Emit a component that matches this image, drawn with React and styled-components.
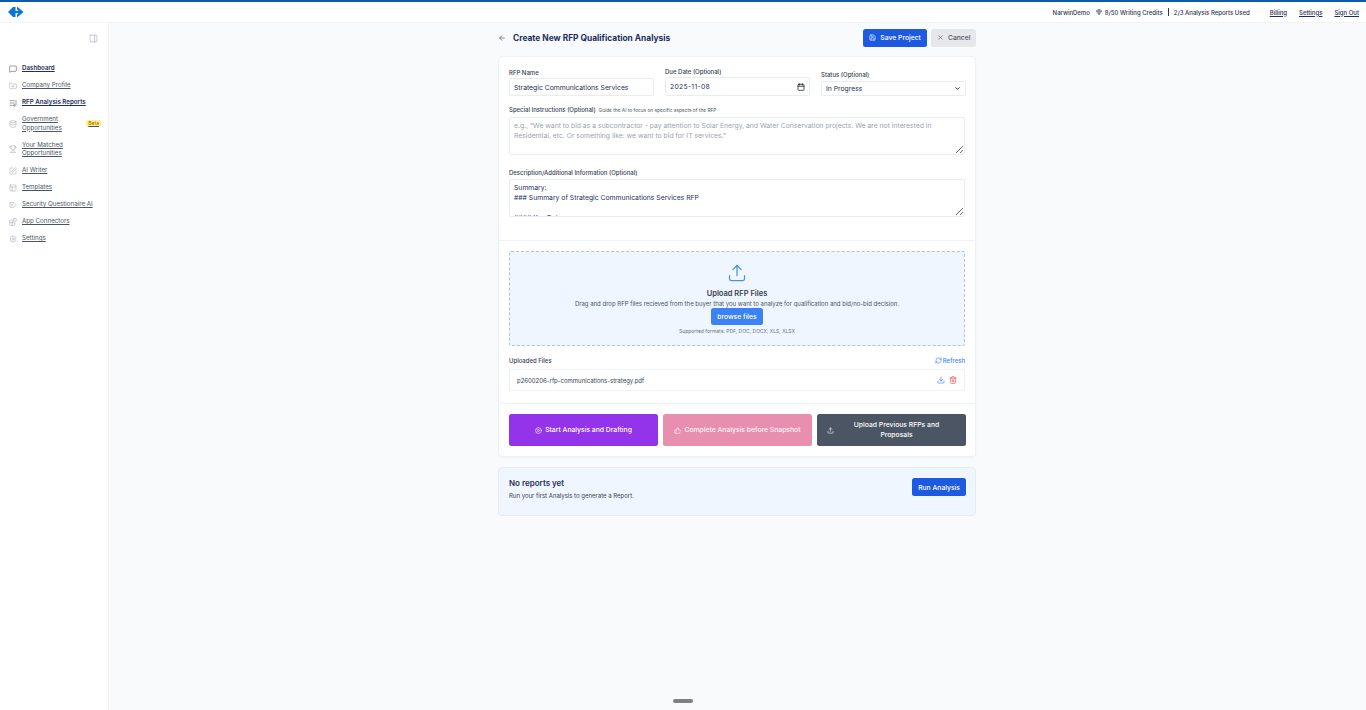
import React from "react";
import styled, { createGlobalStyle } from "styled-components";
import {
  ArrowLeft,
  Save,
  X,
  PanelRight,
  MessageSquare,
  FolderPlus,
  ListEnd,
  Database,
  Trophy,
  SquarePen,
  PanelsTopLeft,
  Blocks,
  Settings,
  Upload,
  RefreshCw,
  Download,
  Trash2,
  CirclePlay,
  ThumbsUp,
  Gem,
  ChevronDown,
  Calendar,
} from "lucide-react";

const NAVY = "#1e2f5c";

const GlobalStyle = createGlobalStyle`
  * { box-sizing: border-box; }
  html, body { margin: 0; height: 100%; }
  body {
    font-family: Inter, "Liberation Sans", sans-serif;
    background: #f8fafc;
    color: ${NAVY};
    overflow: hidden;
  }
`;

const Page = styled.div`
  position: relative;
  height: 710px;
  display: flex;
  flex-direction: column;
`;

const TopBar = styled.header`
  height: 23px;
  flex: none;
  display: flex;
  align-items: center;
  justify-content: space-between;
  padding: 0 7px 0 8px;
  background: #fff;
  border-top: 2px solid #0b5cab;
  border-bottom: 1px solid #f1f3f6;
`;

const Account = styled.div`
  display: flex;
  align-items: center;
  font-size: 6px;
  font-weight: 500;
  color: #2a3654;
`;

const Credits = styled.span`
  display: inline-flex;
  align-items: center;
  gap: 3px;
  margin-left: 6px;
`;

const Divider = styled.span`
  width: 1px;
  height: 8px;
  margin: 0 5px;
  background: #2a3654;
`;

const TopLink = styled.a`
  margin-left: ${(p) => p.$gap}px;
  text-decoration: underline;
  color: ${NAVY};
`;

const Body = styled.div`
  flex: 1;
  display: flex;
  min-height: 0;
`;

const Sidebar = styled.aside`
  width: 109px;
  flex: none;
  padding: 11px 10px 0 9px;
  background: #fff;
  border-right: 1px solid #f1f3f6;
`;

const CollapseRow = styled.div`
  display: flex;
  justify-content: flex-end;
  color: #9ca3af;
  margin-bottom: 17px;
`;

const NavList = styled.nav`
  display: flex;
  flex-direction: column;
  margin-right: -4px;
`;

const NavItem = styled.a`
  display: flex;
  align-items: center;
  min-height: ${(p) => (p.$tall ? 25.5 : 17)}px;
  gap: 5px;
  font-size: 6.2px;
  line-height: 8.5px;
  font-weight: ${(p) => (p.$active ? 600 : 400)};
  color: ${(p) => (p.$active ? NAVY : "#4b5563")};
  text-decoration: underline;
  svg {
    flex: none;
    color: ${(p) => (p.$active ? "#374151" : "#9ca3af")};
  }
`;

const NavLabel = styled.span`
  flex: 1;
`;

const Beta = styled.span`
  margin-right: 1px;
  padding: 0 2px;
  font-size: 5px;
  line-height: 7px;
  color: #a16207;
  background: #fef08a;
  border-radius: 2px;
`;

const Main = styled.main`
  flex: 1;
  display: flex;
  justify-content: center;
  padding-top: 4px;
`;

const Column = styled.div`
  width: 478px;
  margin-left: -1px;
`;

const TitleRow = styled.div`
  height: 21px;
  display: flex;
  align-items: center;
  margin-bottom: 8px;
`;

const BackIcon = styled(ArrowLeft)`
  color: #4b5563;
  margin-right: 7px;
  flex: none;
`;

const Title = styled.h1`
  flex: 1;
  margin: 0;
  font-size: 8.4px;
  font-weight: 700;
  color: ${NAVY};
`;

const HeaderButton = styled.button`
  height: 18px;
  display: inline-flex;
  align-items: center;
  gap: 4px;
  padding: 0 ${(p) => (p.$primary ? 6.5 : 5.5)}px;
  margin-left: ${(p) => (p.$primary ? 0 : 4)}px;
  border: 0;
  border-radius: 2.5px;
  font: 500 6.8px Inter, sans-serif;
  color: ${(p) => (p.$primary ? "#fff" : "#52525b")};
  background: ${(p) => (p.$primary ? "#1d5ae0" : "#e5e7eb")};
`;

const Card = styled.section`
  background: #fff;
  border: 1px solid #eef1f5;
  border-radius: 4px;
  box-shadow: 0 1px 2px rgba(15, 23, 42, 0.04);
`;

const FormBlock = styled.div`
  padding: 10px 10px 23px;
  border-bottom: 1px solid #eef1f5;
`;

const FieldRow = styled.div`
  display: grid;
  grid-template-columns: repeat(3, 145px);
  column-gap: 11px;
  margin-bottom: 9px;
  align-items: end;
`;

const Field = styled.label`
  display: block;
`;

const Label = styled.span`
  display: block;
  margin-bottom: ${(p) => p.$gap ?? 2}px;
  font-size: 6px;
  line-height: 9px;
  font-weight: 500;
  color: #374151;
`;

const Hint = styled.span`
  margin-left: 3px;
  font-size: 4.8px;
  font-weight: 400;
  color: #4b5563;
`;

const inputSkin = `
  background: #fff;
  border: 1px solid #e9ecf1;
  border-radius: 2px;
  font-family: Inter, sans-serif;
  font-size: 6.8px;
  color: ${NAVY};
`;

const TextInput = styled.input`
  ${inputSkin}
  display: block;
  width: 100%;
  height: 18px;
  padding: 0 4px;
  outline: none;
`;

const ControlBox = styled.div`
  ${inputSkin}
  height: ${(p) => p.$h}px;
  display: flex;
  align-items: center;
  justify-content: space-between;
  padding: 0 4px;
`;

const BareInput = styled.input`
  width: 70%;
  padding: 0;
  border: 0;
  outline: none;
  background: none;
  font: inherit;
  color: inherit;
  letter-spacing: 0.3px;
`;

const BareSelect = styled.select`
  flex: 1;
  padding: 0;
  border: 0;
  outline: none;
  background: none;
  appearance: none;
  font: inherit;
  color: inherit;
`;

const TextArea = styled.textarea`
  ${inputSkin}
  display: block;
  width: 100%;
  height: 38px;
  padding: 3px 4px;
  line-height: 10px;
  overflow: hidden;
  outline: none;
  margin-bottom: ${(p) => p.$gap ?? 0}px;
  &::placeholder {
    color: #9ca3af;
  }
`;

const UploadBlock = styled.div`
  padding: 10px 10px 12px;
  border-bottom: 1px solid #eef1f5;
`;

const DropZone = styled.div`
  height: 95px;
  display: flex;
  flex-direction: column;
  align-items: center;
  padding-top: 11px;
  background: #eff6ff;
  border: 1px dashed #a9c4e8;
  border-radius: 2px;
  color: #4b5563;
`;

const UploadIcon = styled(Upload)`
  color: #4a90e2;
  margin-bottom: 4px;
`;

const DropTitle = styled.div`
  font-size: 7.5px;
  line-height: 13px;
  font-weight: 600;
  color: #374151;
`;

const DropText = styled.div`
  font-size: 6px;
  line-height: 8px;
  color: #4b5563;
`;

const BrowseButton = styled.button`
  height: 17px;
  margin: 0 0 2px;
  padding: 0 6px;
  border: 0;
  border-radius: 2.5px;
  font: 500 6.8px Inter, sans-serif;
  color: #fff;
  background: #3b82f6;
`;

const Formats = styled.div`
  font-size: 5px;
  line-height: 8px;
  color: #6b7280;
`;

const FilesHeader = styled.div`
  display: flex;
  justify-content: space-between;
  align-items: center;
  margin: 10px 0 4px;
  font-size: 6px;
  line-height: 9px;
  font-weight: 500;
  color: #374151;
`;

const RefreshLink = styled.span`
  display: inline-flex;
  align-items: center;
  gap: 1px;
  color: #3b82f6;
`;

const FileRow = styled.div`
  height: 22px;
  display: flex;
  align-items: center;
  justify-content: space-between;
  padding: 0 7px;
  font-size: 6px;
  color: #374151;
  border: 1px solid #eef1f5;
  border-radius: 2px;
`;

const FileActions = styled.div`
  display: flex;
  gap: 4px;
`;

const ActionRow = styled.div`
  display: grid;
  grid-template-columns: repeat(3, 149px);
  gap: 5px;
  padding: 10px;
`;

const ActionButton = styled.button`
  height: 32px;
  display: flex;
  align-items: center;
  justify-content: center;
  gap: 3px;
  padding: 0 10px;
  border: 0;
  border-radius: 2.5px;
  white-space: ${(p) => (p.$wrap ? "normal" : "nowrap")};
  font: 500 6.8px/10px Inter, sans-serif;
  color: ${(p) => p.$fg};
  background: ${(p) => p.$bg};
`;

const WrappedLabel = styled.span`
  flex: 1;
  text-align: center;
`;

const ReportCard = styled.section`
  height: 49px;
  margin-top: 10px;
  display: flex;
  align-items: flex-start;
  justify-content: space-between;
  padding: 10px 9px 0 10px;
  background: #eff6ff;
  border: 1px solid #e3ecf8;
  border-radius: 4px;
`;

const ReportTitle = styled.div`
  font-size: 8px;
  line-height: 11px;
  font-weight: 600;
  color: ${NAVY};
`;

const ReportText = styled.div`
  margin-top: 3px;
  font-size: 6px;
  line-height: 8px;
  color: #374151;
`;

const RunButton = styled.button`
  height: 18px;
  padding: 0 6px;
  border: 0;
  border-radius: 2.5px;
  font: 500 6.8px Inter, sans-serif;
  color: #fff;
  background: #1d5ae0;
`;

const Handle = styled.div`
  position: absolute;
  left: 673px;
  top: 699px;
  width: 20px;
  height: 4px;
  border-radius: 2px;
  background: #808080;
`;

const Logo = () => (
  <svg width="16" height="12" viewBox="0 0 16 12" aria-hidden="true">
    <path d="M0 6 L5 1 H7.5 V11 H5 Z" fill="#0b74d8" />
    <path d="M9 0.5 L15.5 6 L9 11.5 V8.5 L11.8 6 L9 3.5 Z" fill="#0b74d8" />
    <path d="M6 4.8 H12 V7.2 H6 Z" fill="#0b74d8" />
  </svg>
);

// tag-shaped mark next to the security item, no package has this one
const SecurityIcon = ({ size, strokeWidth }) => (
  <svg
    width={size}
    height={size}
    viewBox="0 0 24 24"
    fill="none"
    stroke="currentColor"
    strokeWidth={strokeWidth}
    aria-hidden="true"
  >
    <path d="M3 5 H15 L22 12 L15 19 H3 Z" />
    <path d="M7 10 H13 M7 14 H11" />
  </svg>
);

const navItems = [
  { label: "Dashboard", Icon: MessageSquare, active: true },
  { label: "Company Profile", Icon: FolderPlus },
  { label: "RFP Analysis Reports", Icon: ListEnd, active: true },
  { label: "Government Opportunities", Icon: Database, tall: true, beta: true },
  { label: "Your Matched Opportunities", Icon: Trophy, tall: true },
  { label: "AI Writer", Icon: SquarePen },
  { label: "Templates", Icon: PanelsTopLeft },
  { label: "Security Questionaire AI", Icon: SecurityIcon },
  { label: "App Connectors", Icon: Blocks },
  { label: "Settings", Icon: Settings },
];

const descriptionValue =
  "Summary:\n### Summary of Strategic Communications Services RFP\n\n#### Key Dates";

const instructionsHint =
  'e.g., "We want to bid as a subcontractor - pay attention to Solar Energy, and Water Conservation projects. We are not interested in Residential, etc. Or something like: we want to bid for IT services."';

export default function App() {
  return (
    <Page>
      <GlobalStyle />
      <TopBar>
        <Logo />
        <Account>
          NarwinDemo
          <Credits>
            <Gem size={6} />
            8/50 Writing Credits
          </Credits>
          <Divider />
          2/3 Analysis Reports Used
          <TopLink $gap={20}>Billing</TopLink>
          <TopLink $gap={12}>Settings</TopLink>
          <TopLink $gap={12}>Sign Out</TopLink>
        </Account>
      </TopBar>
      <Body>
        <Sidebar>
          <CollapseRow>
            <PanelRight size={9} strokeWidth={1.5} />
          </CollapseRow>
          <NavList>
            {navItems.map(({ label, Icon, active, tall, beta }) => (
              <NavItem key={label} $active={active} $tall={tall}>
                <Icon size={8} strokeWidth={1.5} />
                <NavLabel>{label}</NavLabel>
                {beta && <Beta>Beta</Beta>}
              </NavItem>
            ))}
          </NavList>
        </Sidebar>
        <Main>
          <Column>
            <TitleRow>
              <BackIcon size={8} />
              <Title>Create New RFP Qualification Analysis</Title>
              <HeaderButton $primary>
                <Save size={7} />
                Save Project
              </HeaderButton>
              <HeaderButton>
                <X size={7} />
                Cancel
              </HeaderButton>
            </TitleRow>
            <Card>
              <FormBlock>
                <FieldRow>
                  <Field>
                    <Label $gap={1}>RFP Name</Label>
                    <TextInput readOnly value="Strategic Communications Services" />
                  </Field>
                  <Field>
                    <Label $gap={1}>Due Date (Optional)</Label>
                    <ControlBox $h={19}>
                      <BareInput readOnly value="2025-11-08" />
                      <Calendar size={8} color="#111827" strokeWidth={2.2} />
                    </ControlBox>
                  </Field>
                  <Field>
                    <Label>Status (Optional)</Label>
                    <ControlBox $h={15}>
                      <BareSelect defaultValue="In Progress">
                        <option>In Progress</option>
                      </BareSelect>
                      <ChevronDown size={7} color="#111827" strokeWidth={3} />
                    </ControlBox>
                  </Field>
                </FieldRow>
                <Field>
                  <Label>
                    Special Instructions (Optional)
                    <Hint>Guide the AI to focus on specific aspects of the RFP</Hint>
                  </Label>
                  <TextArea readOnly placeholder={instructionsHint} $gap={13} />
                </Field>
                <Field>
                  <Label>Description/Additional Information (Optional)</Label>
                  <TextArea readOnly value={descriptionValue} />
                </Field>
              </FormBlock>
              <UploadBlock>
                <DropZone>
                  <UploadIcon size={20} strokeWidth={1.5} />
                  <DropTitle>Upload RFP Files</DropTitle>
                  <DropText>
                    Drag and drop RFP files recieved from the buyer that you want
                    to analyze for qualification and bid/no-bid decision.
                  </DropText>
                  <BrowseButton>browse files</BrowseButton>
                  <Formats>Supported formats: PDF, DOC, DOCX, XLS, XLSX</Formats>
                </DropZone>
                <FilesHeader>
                  Uploaded Files
                  <RefreshLink>
                    <RefreshCw size={7} />
                    Refresh
                  </RefreshLink>
                </FilesHeader>
                <FileRow>
                  p2600206-rfp-communications-strategy.pdf
                  <FileActions>
                    <Download size={8} color="#3b82f6" />
                    <Trash2 size={8} color="#ef4444" />
                  </FileActions>
                </FileRow>
              </UploadBlock>
              <ActionRow>
                <ActionButton $bg="#9333ea" $fg="#fff">
                  <CirclePlay size={7} />
                  Start Analysis and Drafting
                </ActionButton>
                <ActionButton $bg="#e88fb0" $fg="#fdf2f8">
                  <ThumbsUp size={7} />
                  Complete Analysis before Snapshot
                </ActionButton>
                <ActionButton $bg="#4b5563" $fg="#fff" $wrap>
                  <Upload size={7} />
                  <WrappedLabel>Upload Previous RFPs and Proposals</WrappedLabel>
                </ActionButton>
              </ActionRow>
            </Card>
            <ReportCard>
              <div>
                <ReportTitle>No reports yet</ReportTitle>
                <ReportText>Run your first Analysis to generate a Report.</ReportText>
              </div>
              <RunButton>Run Analysis</RunButton>
            </ReportCard>
          </Column>
        </Main>
      </Body>
      <Handle />
    </Page>
  );
}
